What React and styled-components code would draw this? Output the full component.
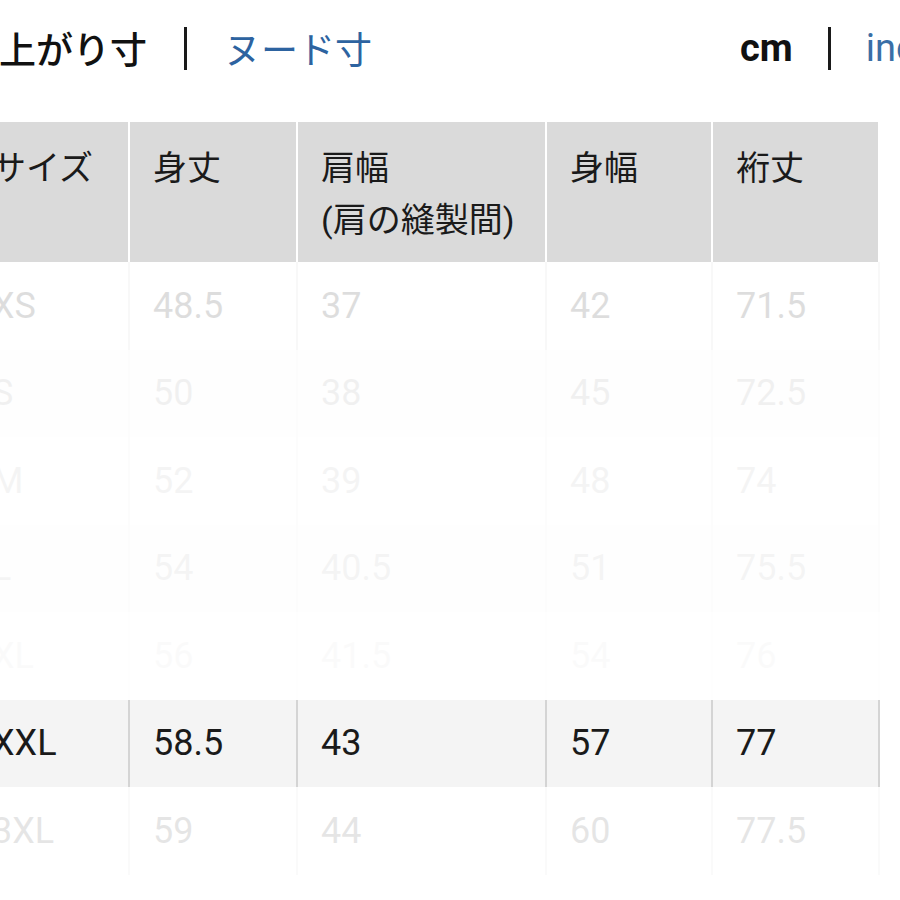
import React from "react";
import styled, { createGlobalStyle } from "styled-components";

const GlobalStyle = createGlobalStyle`
  html, body {
    margin: 0;
    padding: 0;
    background: #fff;
  }
  body {
    font-family: Roboto, "Noto Sans CJK JP", sans-serif;
    color: #1a1a1a;
  }
`;

const COLUMNS = "159px 166px 247px 164px 165px";

const headers = [["サイズ"], ["身丈"], ["肩幅", "(肩の縫製間)"], ["身幅"], ["裄丈"]];

const rows = [
  { size: "XS", values: ["48.5", "37", "42", "71.5"], fade: 0.14 },
  { size: "S", values: ["50", "38", "45", "72.5"], fade: 0.06 },
  { size: "M", values: ["52", "39", "48", "74"], fade: 0.045 },
  { size: "L", values: ["54", "40.5", "51", "75.5"], fade: 0.045 },
  { size: "XL", values: ["56", "41.5", "54", "76"], fade: 0.015 },
  { size: "XXL", values: ["58.5", "43", "57", "77"], fade: 1 },
  { size: "3XL", values: ["59", "44", "60", "77.5"], fade: 0.11 },
];

const App = () => {
  return (
    <Page>
      <GlobalStyle />
      <TopBar>
        <ModeGroup>
          <Label>仕上がり寸</Label>
          <Divider />
          <Label $link>ヌード寸</Label>
        </ModeGroup>
        <UnitGroup>
          <Unit>cm</Unit>
          <Divider />
          <Unit $link>inch</Unit>
        </UnitGroup>
      </TopBar>

      <Table>
        <HeadRow>
          {headers.map((lines, i) => (
            <HeadCell key={i}>
              {lines.map((line) => (
                <div key={line}>{line}</div>
              ))}
            </HeadCell>
          ))}
        </HeadRow>
        {rows.map((row, i) => (
          <BodyRow key={row.size} $fade={row.fade}>
            <BodyCell $shaded={i % 2 === 1}>{row.size}</BodyCell>
            {row.values.map((v, j) => (
              <BodyCell key={j} $shaded={i % 2 === 1}>
                {v}
              </BodyCell>
            ))}
          </BodyRow>
        ))}
      </Table>
    </Page>
  );
};

export default App;

const Page = styled.div`
  width: 900px;
  height: 900px;
  overflow: hidden;
  background: #fff;
`;

const TopBar = styled.div`
  display: flex;
  align-items: center;
  justify-content: space-between;
  height: 96px;
`;

const ModeGroup = styled.div`
  display: flex;
  align-items: center;
  gap: 37px;
  margin-left: -38px;
`;

const UnitGroup = styled.div`
  display: flex;
  align-items: center;
  gap: 35px;
  width: 160px;
  flex-shrink: 0;
  white-space: nowrap;
`;

const Label = styled.span`
  font-family: "Noto Sans CJK JP", sans-serif;
  font-size: 37px;
  font-weight: ${({ $link }) => ($link ? 400 : 500)};
  color: ${({ $link }) => ($link ? "#2d63a0" : "#111")};
`;

const Unit = styled.span`
  font-family: Roboto, "Liberation Sans", sans-serif;
  font-size: 38px;
  font-weight: ${({ $link }) => ($link ? 400 : 700)};
  color: ${({ $link }) => ($link ? "#3a6fa6" : "#111")};
`;

const Divider = styled.span`
  flex-shrink: 0;
  width: 3px;
  height: 43px;
  background: #1a1a1a;
`;

const Table = styled.div`
  display: flex;
  flex-direction: column;
  width: max-content;
  margin-top: 26px;
  margin-left: -31px;
`;

const HeadRow = styled.div`
  display: grid;
  grid-template-columns: ${COLUMNS};
  column-gap: 2px;
  height: 140px;
  padding-right: 2px;
`;

const HeadCell = styled.div`
  box-sizing: border-box;
  background: #dadada;
  padding: 20px 0 0 23px;
  font-size: 34px;
  line-height: 52px;
  color: #1a1a1a;
`;

const BodyRow = styled.div`
  display: grid;
  grid-template-columns: ${COLUMNS};
  column-gap: 2px;
  padding-right: 2px;
  background: #d4d4d4;
  opacity: ${({ $fade }) => $fade};
`;

const BodyCell = styled.div`
  box-sizing: border-box;
  display: flex;
  align-items: center;
  height: 87.5px;
  padding-left: 23px;
  background: ${({ $shaded }) => ($shaded ? "#f4f4f4" : "#fff")};
  font-size: 36px;
  color: #1a1a1a;
`;
